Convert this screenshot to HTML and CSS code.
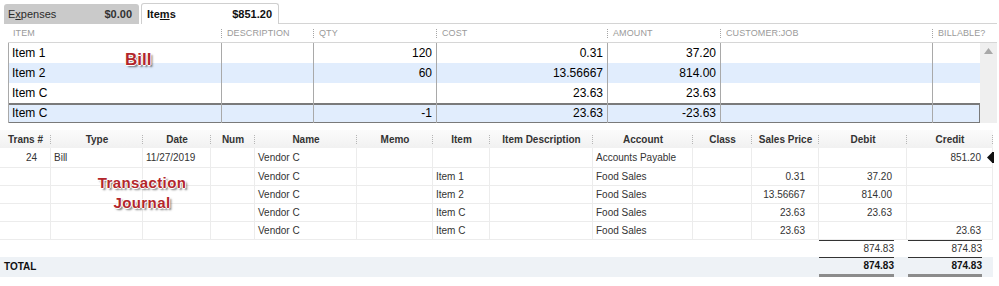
FILE: index.html
```html
<!DOCTYPE html>
<html>
<head>
<meta charset="utf-8">
<link rel="stylesheet" href="styles.css">
</head>
<body>
<div class="page">
  <div class="tabs">
    <div class="tab tab-off"><span class="tab-name">E<u>x</u>penses</span><span class="tab-amt">$0.00</span></div>
    <div class="tab tab-on"><span class="tab-name">Ite<u>m</u>s</span><span class="tab-amt">$851.20</span></div>
    <div class="tab-rest"></div>
  </div>

  <div class="bill">
    <div class="bill-main">
      <div class="bill-row bill-head">
        <div class="bh bh-first">Item</div>
        <div class="bh">Description</div>
        <div class="bh">Qty</div>
        <div class="bh">Cost</div>
        <div class="bh">Amount</div>
        <div class="bh">Customer:Job</div>
        <div class="bh">Billable?</div>
      </div>
      <div class="bill-row">
        <div class="bc">Item 1</div><div class="bc"></div><div class="bc num">120</div><div class="bc num">0.31</div><div class="bc num">37.20</div><div class="bc"></div><div class="bc"></div>
      </div>
      <div class="bill-row alt">
        <div class="bc">Item 2</div><div class="bc"></div><div class="bc num">60</div><div class="bc num">13.56667</div><div class="bc num">814.00</div><div class="bc"></div><div class="bc"></div>
      </div>
      <div class="bill-row">
        <div class="bc">Item C</div><div class="bc"></div><div class="bc num"></div><div class="bc num">23.63</div><div class="bc num">23.63</div><div class="bc"></div><div class="bc"></div>
      </div>
      <div class="bill-row alt selected">
        <div class="bc">Item C</div><div class="bc"></div><div class="bc num">-1</div><div class="bc num">23.63</div><div class="bc num">-23.63</div><div class="bc"></div><div class="bc"></div>
      </div>
    </div>
    <div class="bill-scroll">
      <div class="scroll-head"></div>
      <div class="scroll-track">
        <svg class="scroll-up" width="9" height="6" viewBox="0 0 9 6"><polygon points="4.5,0 9,6 0,6" fill="#a8a8a8"/></svg>
      </div>
    </div>
  </div>

  <table class="journal">
    <colgroup>
      <col style="width:51px"><col style="width:92px"><col style="width:68px"><col style="width:44px">
      <col style="width:102px"><col style="width:76px"><col style="width:57px"><col style="width:103px">
      <col style="width:100px"><col style="width:59px"><col style="width:67px"><col style="width:88px">
      <col style="width:86px">
    </colgroup>
    <thead>
      <tr>
        <th>Trans #</th><th>Type</th><th>Date</th><th>Num</th><th>Name</th><th>Memo</th><th>Item</th>
        <th>Item Description</th><th>Account</th><th>Class</th><th>Sales Price</th><th>Debit</th><th>Credit</th>
      </tr>
    </thead>
    <tbody>
      <tr class="first">
        <td class="r trans">24</td><td class="l">Bill</td><td class="l date">11/27/2019</td><td></td><td class="l">Vendor C</td><td></td><td></td><td></td>
        <td class="l">Accounts Payable</td><td></td><td class="r price"></td><td class="r debit"></td>
        <td class="r credit cur">851.20<svg class="marker" width="7" height="11" viewBox="0 0 7 11"><polygon points="5,0.5 0,5.5 5,10.5" fill="#111"/><rect x="5" y="0" width="2" height="11" fill="#111"/></svg></td>
      </tr>
      <tr>
        <td></td><td></td><td></td><td></td><td class="l">Vendor C</td><td></td><td class="l">Item 1</td><td></td>
        <td class="l">Food Sales</td><td></td><td class="r price">0.31</td><td class="r debit">37.20</td><td class="r credit"></td>
      </tr>
      <tr>
        <td></td><td></td><td></td><td></td><td class="l">Vendor C</td><td></td><td class="l">Item 2</td><td></td>
        <td class="l">Food Sales</td><td></td><td class="r price">13.56667</td><td class="r debit">814.00</td><td class="r credit"></td>
      </tr>
      <tr>
        <td></td><td></td><td></td><td></td><td class="l">Vendor C</td><td></td><td class="l">Item C</td><td></td>
        <td class="l">Food Sales</td><td></td><td class="r price">23.63</td><td class="r debit">23.63</td><td class="r credit"></td>
      </tr>
      <tr>
        <td></td><td></td><td></td><td></td><td class="l">Vendor C</td><td></td><td class="l">Item C</td><td></td>
        <td class="l">Food Sales</td><td></td><td class="r price">23.63</td><td class="r debit"></td><td class="r credit">23.63</td>
      </tr>
      <tr class="subtotal">
        <td colspan="11"></td>
        <td><div class="sum sum-debit">874.83</div></td>
        <td><div class="sum sum-credit">874.83</div></td>
      </tr>
      <tr class="total">
        <td colspan="11" class="total-label">TOTAL</td>
        <td><div class="sum sum-debit">874.83</div></td>
        <td><div class="sum sum-credit">874.83</div></td>
      </tr>
    </tbody>
  </table>

  <div class="note note-bill">Bill</div>
  <div class="note note-journal">Transaction<br>Journal</div>
</div>
</body>
</html>
```

FILE: styles.css
```css
html, body {
  margin: 0;
  padding: 0;
  background: #fff;
}

.page {
  position: relative;
  width: 999px;
  height: 286px;
  overflow: hidden;
  font-family: "Liberation Sans", Arial, sans-serif;
  color: #000;
}

/* ---------- tabs ---------- */
.tabs {
  display: flex;
  align-items: flex-end;
  width: 997px;
  height: 24px;
  padding-left: 4px;
  box-sizing: border-box;
}

.tab {
  display: flex;
  align-items: center;
  justify-content: space-between;
  box-sizing: border-box;
  font-size: 11px;
  border-radius: 3px 3px 0 0;
}

.tab-off {
  width: 135px;
  height: 20px;
  padding: 0 7px 0 4px;
  background: #cacaca;
  color: #2b2b2b;
  margin-right: 2px;
}

.tab-off .tab-amt {
  font-weight: bold;
  color: #333;
}

.tab-on {
  width: 138px;
  height: 21px;
  padding: 0 6px 0 5px;
  background: #fff;
  border: 1px solid #cfcfcf;
  border-bottom: none;
  font-weight: bold;
  color: #111;
}

.tab-rest {
  flex: 1;
  height: 24px;
  box-sizing: border-box;
  border-bottom: 1px solid #d4d4d4;
}

/* ---------- bill grid ---------- */
.bill {
  display: flex;
  margin-left: 8px;
  width: 989px;
}

.bill-main {
  width: 972px;
}

.bill-row {
  display: grid;
  grid-template-columns: 213px 92px 123px 171px 113px 212px 48px;
  height: 20px;
  font-size: 12px;
  line-height: 20px;
}

.bill-row.alt {
  background: #e1edfd;
}

.bill-row.selected {
  box-shadow: inset 0 2px 0 #7a7a7a, inset 0 -1px 0 #7a7a7a, inset -1px 0 0 #7a7a7a, inset 1px 0 0 #7a7a7a;
}

.bill-head {
  height: 19px;
  box-sizing: border-box;
  border-bottom: 1px solid #d6d6d6;
  font-size: 9px;
  line-height: 18px;
  color: #9a9a9a;
  text-transform: uppercase;
  letter-spacing: 0.1px;
}

.bh {
  padding-left: 6px;
  background: repeating-linear-gradient(to bottom, #a5a5a5 0 1px, transparent 1px 2px) left center / 1px 9px no-repeat;
}

.bh-first {
  padding-left: 5px;
  background: none;
}

.bc {
  border-left: 1px solid #a9a9a9;
  padding: 0 4px 0 3px;
  white-space: nowrap;
  overflow: hidden;
}

.bc.num {
  text-align: right;
}

.bill-scroll {
  width: 17px;
  display: flex;
  flex-direction: column;
}

.scroll-head {
  height: 19px;
  box-sizing: border-box;
  border-bottom: 1px solid #d6d6d6;
}

.scroll-track {
  flex: 1;
  background: #efefef;
  display: flex;
  justify-content: center;
  padding-top: 5px;
  box-sizing: border-box;
}

.scroll-up {
  display: block;
}

/* ---------- journal ---------- */
.journal {
  width: 993px;
  table-layout: fixed;
  border-collapse: separate;
  border-spacing: 0;
  margin-top: 7px;
  font-size: 10px;
  color: #333;
}

.journal th {
  height: 18px;
  padding: 0;
  font-size: 10px;
  font-weight: bold;
  color: #333;
  text-align: center;
  white-space: nowrap;
  background:
    repeating-linear-gradient(to bottom, #b5b5b5 0 1px, transparent 1px 2px) right center / 1px 9px no-repeat,
    linear-gradient(to bottom, #fbfbfb, #f1f1f1);
}

.journal td {
  padding: 0;
  line-height: 17px;
  border-right: 1px solid #ececec;
  border-bottom: 1px solid #ececec;
  white-space: nowrap;
  overflow: hidden;
}

.journal tr.first td {
  line-height: 19px;
}

.journal td.l {
  padding-left: 3px;
}

.journal td.r {
  text-align: right;
}

.journal td.trans { padding-right: 13px; }
.journal td.price { padding-right: 13px; }
.journal td.debit { padding-right: 14px; }
.journal td.credit { padding-right: 11px; }

.journal td.cur {
  position: relative;
  overflow: visible;
}

.marker {
  position: absolute;
  right: -2px;
  top: 4px;
}

.journal tr.subtotal td,
.journal tr.total td {
  border: none;
  line-height: 16px;
}

.sum {
  border-top: 1px solid #333;
  text-align: right;
}

.sum-debit {
  margin-right: 13px;
}

.sum-credit {
  margin-left: 1px;
  margin-right: 11px;
}

.journal tr.total td {
  background: #eef2f6;
  font-weight: bold;
  color: #111;
}

.journal tr.total .sum {
  border-bottom: 3px solid #8c8c8c;
}

.journal td.total-label {
  padding-left: 4px;
  color: #000;
}

/* ---------- annotations ---------- */
.note {
  position: absolute;
  color: #b3262b;
  font-weight: bold;
  text-align: center;
  text-shadow:
    -1px 0 0 #fff, 1px 0 0 #fff, 0 -1px 0 #fff, 0 1px 0 #fff,
    2px 2px 2px rgba(0, 0, 0, 0.55);
}

.note-bill {
  left: 125px;
  top: 50px;
  font-size: 17px;
  line-height: 20px;
}

.note-journal {
  left: 92px;
  top: 173px;
  width: 100px;
  font-size: 15px;
  line-height: 20px;
  letter-spacing: 0.4px;
}
```
